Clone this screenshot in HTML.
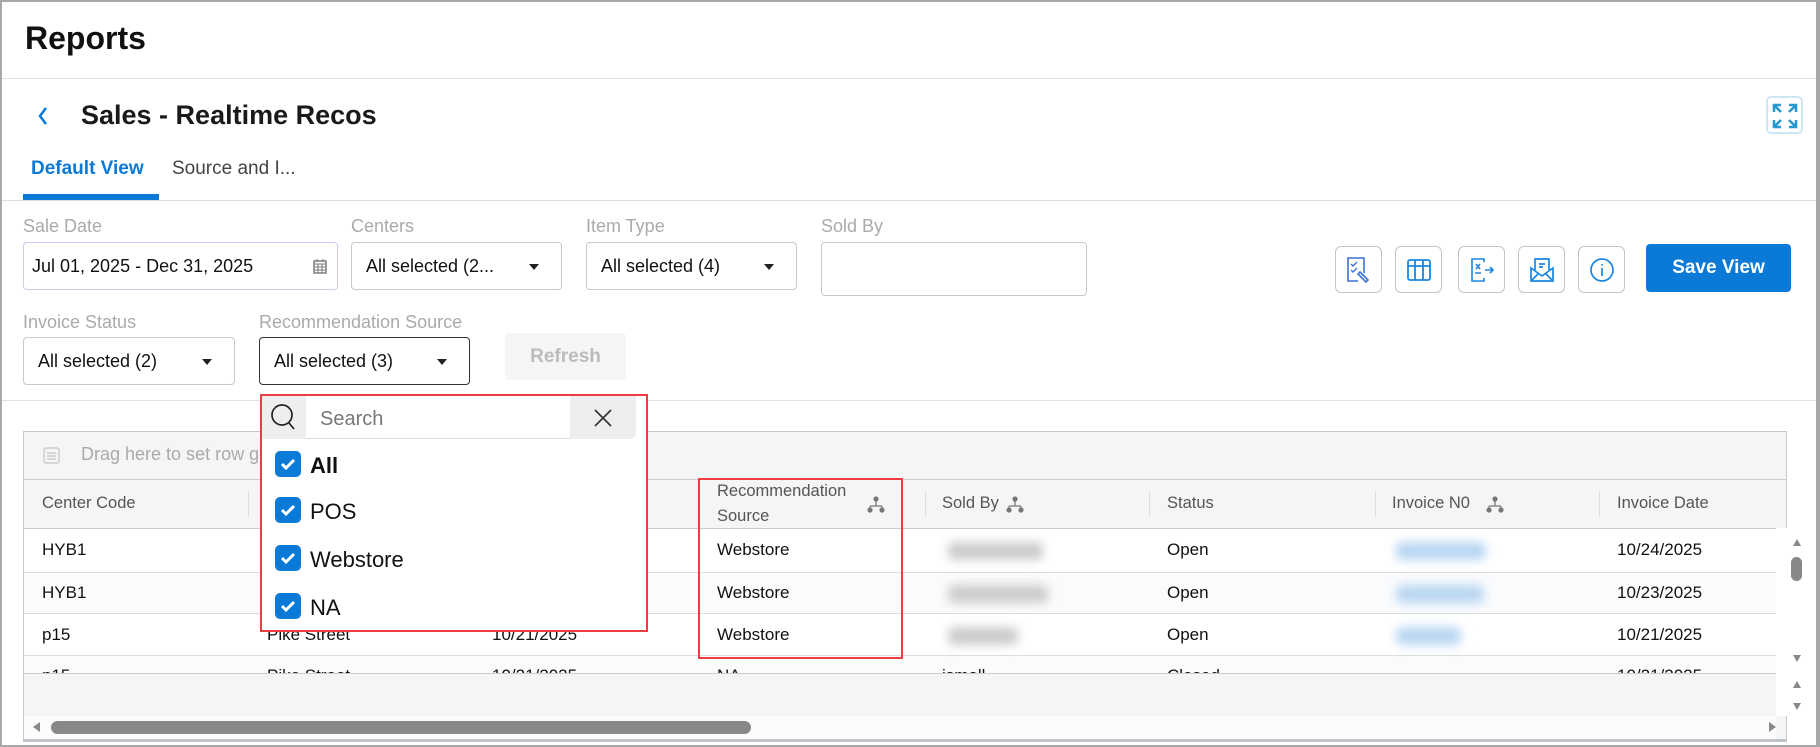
<!DOCTYPE html>
<html><head><meta charset="utf-8"><style>
*{box-sizing:border-box;margin:0;padding:0}
body{width:1820px;height:747px;overflow:hidden;background:#fff;font-family:"Liberation Sans",sans-serif;color:#111;position:relative}
.a{position:absolute}
.frame{left:0;top:0;width:1820px;height:747px;border:2px solid #a8a8a8;border-right-width:4px}
.lbl{font-size:18px;color:#aaa}
.fld{border:1px solid #c8c8c8;border-radius:4px;height:48px;font-size:18px;display:flex;align-items:center;padding-left:14px;background:#fff}
.car{position:absolute;right:22px;top:21px;width:0;height:0;border-left:5px solid transparent;border-right:5px solid transparent;border-top:6px solid #222}
.ib{width:47px;height:47px;border:1px solid #c4c4c4;border-radius:6px;display:flex;align-items:center;justify-content:center}
.hd{font-size:16.5px;color:#555;top:479px;height:49px;display:flex;align-items:center}
.dv{top:492px;width:1px;height:24px;background:#ddd}
.cell{font-size:17px;color:#111}
.rl{left:23px;width:1764px;height:1px;background:#ddd}
.cb{left:275px;width:26px;height:26px;background:#0a7ad6;border-radius:5px}
.it{left:310px;font-size:22px;color:#111}
.blur{filter:blur(5px);border-radius:6px}
</style></head><body>
<div class="a frame"></div>
<div class="a" style="left:25px;top:20px;font-size:32px;font-weight:bold">Reports</div>
<div class="a" style="left:2px;top:78px;width:1814px;height:1px;background:#e2e2e2"></div>
<svg class="a" style="left:36px;top:105px" width="14" height="22"><path d="M10 3 L4 11 L10 19" stroke="#0a7ad6" stroke-width="2.5" fill="none"/></svg>
<div class="a" style="left:81px;top:100px;font-size:27px;font-weight:bold;color:#1a1a1a">Sales - Realtime Recos</div>
<div class="a" style="left:1766px;top:96px;width:37px;height:38px;border:2px solid #cce6f2;border-radius:5px"></div>
<svg class="a" style="left:1770px;top:101px" width="30" height="30" stroke="#2a98d0" stroke-width="2.6" fill="none"><path d="M4 11V4H11M4 4L11 11M19 4H26V11M26 4L19 11M4 19V26H11M4 26L11 19M26 19V26H19M26 26L19 19"/></svg>
<div class="a" style="left:31px;top:158px;font-size:19px;font-weight:bold;color:#0a7ad6">Default View</div>
<div class="a" style="left:172px;top:158px;font-size:19px;color:#444">Source and I...</div>
<div class="a" style="left:23px;top:194px;width:136px;height:6px;background:#0a7ad6"></div>
<div class="a" style="left:2px;top:200px;width:1814px;height:1px;background:#ddd"></div>

<div class="a lbl" style="left:23px;top:216px">Sale Date</div>
<div class="a lbl" style="left:351px;top:216px">Centers</div>
<div class="a lbl" style="left:586px;top:216px">Item Type</div>
<div class="a lbl" style="left:821px;top:216px">Sold By</div>
<div class="a fld" style="left:23px;top:242px;width:315px;border-color:#c9cdf0;padding-left:8px">Jul 01, 2025 - Dec 31, 2025
<svg class="a" style="right:10px;top:15px" width="14" height="16"><rect x="1" y="3" width="12" height="12" fill="none" stroke="#777" stroke-width="1.4"/><path d="M1 6H13M4 1V4M10 1V4M1 9H13M1 12H13M5 6V15M9 6V15" stroke="#777" stroke-width="1"/></svg></div>
<div class="a fld" style="left:351px;top:242px;width:211px">All selected (2...<span class="car"></span></div>
<div class="a fld" style="left:586px;top:242px;width:211px">All selected (4)<span class="car"></span></div>
<div class="a fld" style="left:821px;top:242px;width:266px;height:54px"></div>

<div class="a ib" style="left:1335px;top:246px"><svg width="30" height="30" fill="none" stroke="#3a72d8" stroke-width="1.6"><path d="M20 18V3H4V26H14"/><path d="M7 9l2 2 4-4M7 15l2 2 4-4" stroke-width="1.4"/><path d="M16 17l8 8-2 2-8-8z"/></svg></div>
<div class="ib" style="position:absolute;left:1395px;top:246px"><svg width="26" height="26" fill="none" stroke="#1a86e0" stroke-width="1.8"><rect x="2" y="3" width="22" height="20" rx="2"/><path d="M9 3V23M17 3V23M2 9H24" stroke-dasharray="0"/></svg></div>
<div class="ib" style="position:absolute;left:1458px;top:246px"><svg width="26" height="26" fill="none" stroke="#1a86e0" stroke-width="1.6"><path d="M15 5V2H3V24H15V21"/><path d="M7 7l4 5M11 7l-4 5M6 16H12M16 13H24M21 10l3 3-3 3"/></svg></div>
<div class="ib" style="position:absolute;left:1518px;top:246px"><svg width="28" height="28" fill="none" stroke="#1a86e0" stroke-width="1.7"><path d="M3 12V25H25V12L14 20Z"/><path d="M3 25L11 17M25 25L17 17"/><path d="M7 14V3H21V14M11 8H17M11 11H15"/></svg></div>
<div class="ib" style="position:absolute;left:1578px;top:246px"><svg width="26" height="26" fill="none" stroke="#1a86e0" stroke-width="1.7"><circle cx="13" cy="13" r="11"/><path d="M13 11V19M13 7V8.5"/></svg></div>
<div class="a" style="left:1646px;top:244px;width:145px;height:48px;background:#0a7ad6;border-radius:4px;color:#fff;font-size:19px;font-weight:bold;display:flex;align-items:center;justify-content:center">Save View</div>

<div class="a lbl" style="left:23px;top:312px">Invoice Status</div>
<div class="a lbl" style="left:259px;top:312px">Recommendation Source</div>
<div class="a fld" style="left:23px;top:337px;width:212px">All selected (2)<span class="car"></span></div>
<div class="a fld" style="left:259px;top:337px;width:211px;border-color:#333">All selected (3)<span class="car"></span></div>
<div class="a" style="left:505px;top:333px;width:121px;height:47px;background:#f5f5f5;border-radius:4px;color:#bbb;font-size:19px;font-weight:bold;display:flex;align-items:center;justify-content:center">Refresh</div>
<div class="a" style="left:2px;top:400px;width:1814px;height:1px;background:#e2e2e2"></div>

<!-- grid -->
<div class="a" style="left:23px;top:431px;width:1764px;height:310px;border:1px solid #c8c8c8;background:#f4f5f5"></div>
<svg class="a" style="left:43px;top:447px" width="17" height="17" fill="none" stroke="#ccc" stroke-width="1.4"><rect x="1" y="1" width="15" height="15" rx="2"/><path d="M4 6H13M4 9H13M4 12H13"/></svg>
<div class="a" style="left:81px;top:444px;font-size:18px;color:#aaa">Drag here to set row groups</div>
<div class="a" style="left:23px;top:479px;width:1764px;height:1px;background:#ccc"></div>
<div class="a hd" style="left:42px">Center Code</div>
<div class="a dv" style="left:248px"></div>
<div class="a hd" style="left:717px;line-height:25px">Recommendation<br>Source</div>
<svg class="a" style="left:867px;top:496px" width="18" height="18" fill="#777"><circle cx="9" cy="3" r="2.6"/><circle cx="3" cy="14" r="2.6"/><circle cx="15" cy="14" r="2.6"/><path d="M9 5V10M3 10H15M3 10V13M15 10V13" stroke="#777" stroke-width="1.3"/></svg>
<div class="a dv" style="left:925px"></div>
<div class="a hd" style="left:942px">Sold By</div>
<svg class="a" style="left:1006px;top:496px" width="18" height="18" fill="#777"><circle cx="9" cy="3" r="2.6"/><circle cx="3" cy="14" r="2.6"/><circle cx="15" cy="14" r="2.6"/><path d="M9 5V10M3 10H15M3 10V13M15 10V13" stroke="#777" stroke-width="1.3"/></svg>
<div class="a dv" style="left:1149px"></div>
<div class="a hd" style="left:1167px">Status</div>
<div class="a dv" style="left:1375px"></div>
<div class="a hd" style="left:1392px">Invoice N0</div>
<svg class="a" style="left:1486px;top:496px" width="18" height="18" fill="#777"><circle cx="9" cy="3" r="2.6"/><circle cx="3" cy="14" r="2.6"/><circle cx="15" cy="14" r="2.6"/><path d="M9 5V10M3 10H15M3 10V13M15 10V13" stroke="#777" stroke-width="1.3"/></svg>
<div class="a dv" style="left:1599px"></div>
<div class="a hd" style="left:1617px">Invoice Date</div>

<div class="a" style="left:24px;top:528px;width:1762px;height:145px;background:#fff"></div>
<div class="a" style="left:24px;top:572px;width:1762px;height:41px;background:#fafbfd"></div>
<div class="a" style="left:24px;top:656px;width:1762px;height:17px;background:#fafbfd;overflow:hidden"></div>
<div class="a rl" style="top:528px;background:#ccc"></div>
<div class="a rl" style="top:572px"></div>
<div class="a rl" style="top:613px"></div>
<div class="a rl" style="top:655px"></div>
<div class="a rl" style="top:673px;background:#ccc"></div>

<div class="a cell" style="left:42px;top:540px">HYB1</div>
<div class="a cell" style="left:42px;top:583px">HYB1</div>
<div class="a cell" style="left:42px;top:625px">p15</div>
<div class="a cell" style="left:267px;top:625px">Pike Street</div>
<div class="a cell" style="left:492px;top:625px">10/21/2025</div>
<div class="a cell" style="left:717px;top:540px">Webstore</div>
<div class="a cell" style="left:717px;top:583px">Webstore</div>
<div class="a cell" style="left:717px;top:625px">Webstore</div>
<div class="a cell" style="left:1167px;top:540px">Open</div>
<div class="a cell" style="left:1167px;top:583px">Open</div>
<div class="a cell" style="left:1167px;top:625px">Open</div>
<div class="a cell" style="left:1617px;top:540px">10/24/2025</div>
<div class="a cell" style="left:1617px;top:583px">10/23/2025</div>
<div class="a cell" style="left:1617px;top:625px">10/21/2025</div>
<div class="a" style="left:24px;top:664px;width:1762px;height:9px;overflow:hidden"><div style="position:absolute;left:18px;top:2px;font-size:17px;color:#111">p15</div><div style="position:absolute;left:243px;top:2px;font-size:17px">Pike Street</div><div style="position:absolute;left:468px;top:2px;font-size:17px">10/21/2025</div><div style="position:absolute;left:693px;top:2px;font-size:17px">NA</div><div style="position:absolute;left:918px;top:2px;font-size:17px">jsmall</div><div style="position:absolute;left:1143px;top:2px;font-size:17px">Closed</div><div style="position:absolute;left:1593px;top:2px;font-size:17px">10/21/2025</div></div>
<div class="a blur" style="left:948px;top:542px;width:95px;height:18px;background:#ccc"></div>
<div class="a blur" style="left:948px;top:585px;width:100px;height:18px;background:#ccc"></div>
<div class="a blur" style="left:948px;top:627px;width:70px;height:18px;background:#ccc"></div>
<div class="a blur" style="left:1396px;top:542px;width:90px;height:18px;background:#b9d6f2"></div>
<div class="a blur" style="left:1396px;top:585px;width:88px;height:18px;background:#b9d6f2"></div>
<div class="a blur" style="left:1396px;top:627px;width:65px;height:18px;background:#b9d6f2"></div>

<!-- scrollbars -->
<div class="a" style="left:1776px;top:528px;width:11px;height:188px;background:#fff"></div>
<div class="a" style="left:1793px;top:539px;width:0;height:0;border-left:4px solid transparent;border-right:4px solid transparent;border-bottom:7px solid #888"></div>
<div class="a" style="left:1791px;top:557px;width:11px;height:24px;background:#888;border-radius:6px"></div>
<div class="a" style="left:1793px;top:655px;width:0;height:0;border-left:4px solid transparent;border-right:4px solid transparent;border-top:7px solid #888"></div>
<div class="a" style="left:1793px;top:681px;width:0;height:0;border-left:4px solid transparent;border-right:4px solid transparent;border-bottom:7px solid #888"></div>
<div class="a" style="left:1793px;top:703px;width:0;height:0;border-left:4px solid transparent;border-right:4px solid transparent;border-top:7px solid #888"></div>
<div class="a" style="left:24px;top:716px;width:1752px;height:23px;background:#fcfcfc"></div>
<div class="a" style="left:33px;top:722px;width:0;height:0;border-top:5px solid transparent;border-bottom:5px solid transparent;border-right:7px solid #888"></div>
<div class="a" style="left:51px;top:721px;width:700px;height:13px;background:#888;border-radius:7px"></div>
<div class="a" style="left:1769px;top:722px;width:0;height:0;border-top:5px solid transparent;border-bottom:5px solid transparent;border-left:7px solid #888"></div>
<div class="a" style="left:23px;top:739px;width:1764px;height:3px;background:#c0c4c8"></div>

<!-- dropdown -->
<div class="a" style="left:260px;top:394px;width:388px;height:238px;background:#fff;border:2px solid #ee3c44"></div>
<div class="a" style="left:262px;top:396px;width:44px;height:43px;background:#eee"></div>
<svg class="a" style="left:270px;top:403px" width="28" height="28" fill="none" stroke="#222" stroke-width="1.7"><circle cx="12" cy="12" r="10"/><path d="M19 20L24 26"/></svg>
<div class="a" style="left:306px;top:396px;width:264px;height:43px;border-bottom:1px solid #ddd;font-size:20px;color:#777;padding:12px 14px">Search</div>
<div class="a" style="left:570px;top:396px;width:66px;height:43px;background:#eee;border-radius:0 0 6px 0"></div>
<svg class="a" style="left:593px;top:408px" width="20" height="20" stroke="#333" stroke-width="1.6"><path d="M2 2L18 18M18 2L2 18"/></svg>
<div class="a cb" style="top:451px"></div>
<div class="a cb" style="top:497px"></div>
<div class="a cb" style="top:545px"></div>
<div class="a cb" style="top:593px"></div>
<svg class="a" style="left:275px;top:451px" width="26" height="170" fill="none" stroke="#fff" stroke-width="3"><path d="M7 13l4 4 8-8M7 59l4 4 8-8M7 107l4 4 8-8M7 155l4 4 8-8"/></svg>
<div class="a it" style="top:453px;font-weight:bold">All</div>
<div class="a it" style="top:499px">POS</div>
<div class="a it" style="top:547px">Webstore</div>
<div class="a it" style="top:595px">NA</div>

<div class="a" style="left:698px;top:478px;width:205px;height:181px;border:2px solid #ee3c44"></div>
</body></html>
